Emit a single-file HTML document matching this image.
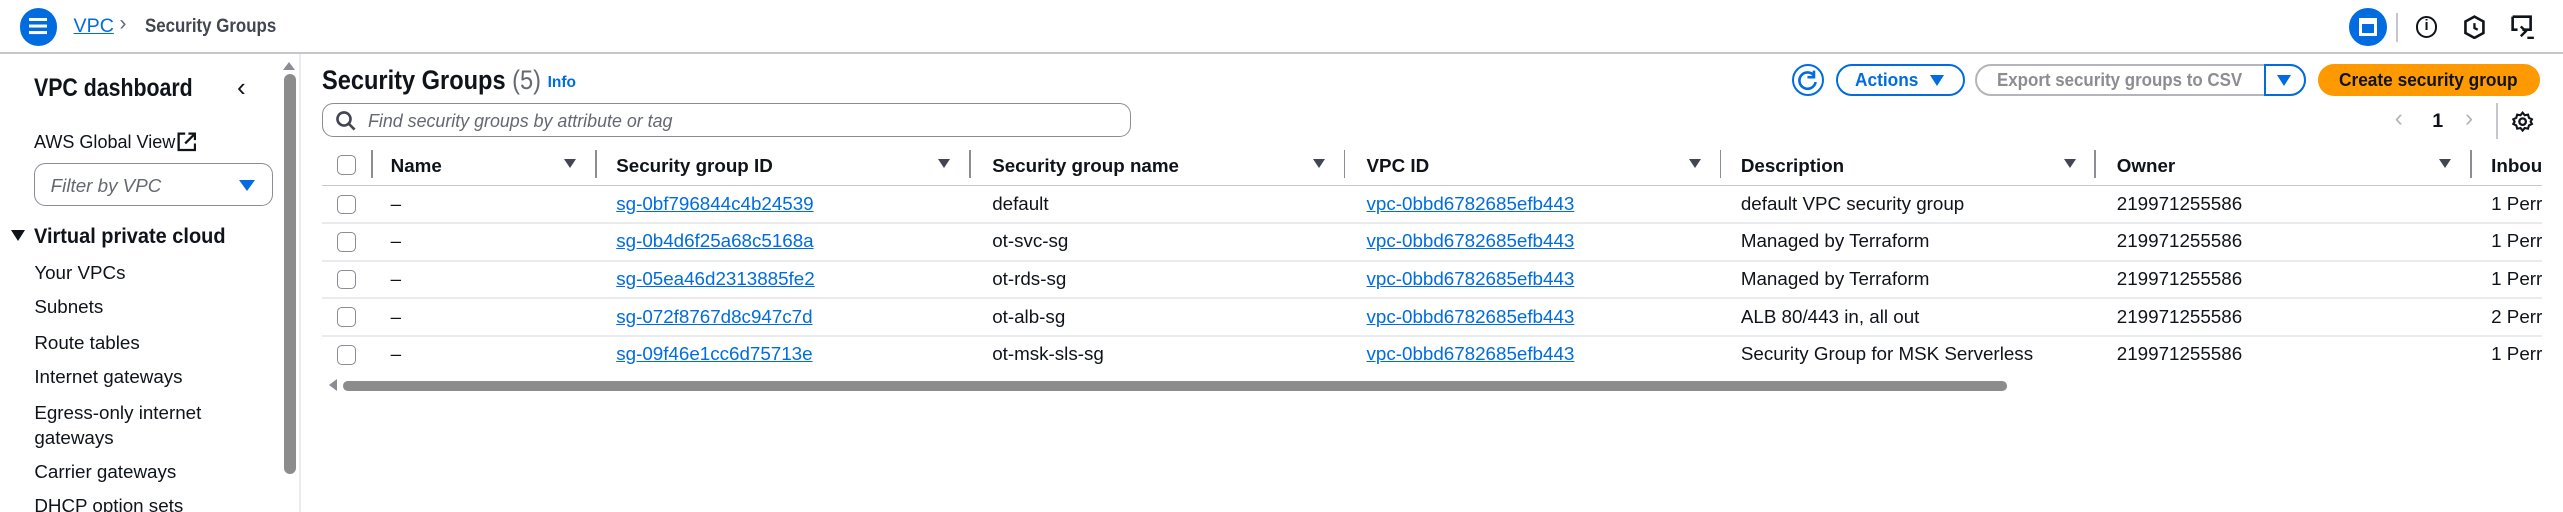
<!DOCTYPE html>
<html><head><meta charset="utf-8"><style>
*{box-sizing:border-box;margin:0;padding:0}
html,body{width:2563px;height:512px;overflow:hidden;background:#fff}
#w{zoom:1.6346;width:1568px;height:313px;position:relative;font-family:"Liberation Sans",sans-serif;color:#0f141a;font-size:11.5px;background:#fff}
.a{position:absolute;white-space:nowrap}
.lk{color:#006ce0;text-decoration:underline}
.b{font-weight:bold}
.cb{position:absolute;width:12px;height:12px;border:1px solid #8c8c94;border-radius:3px;background:#fff}
.hd{position:absolute;top:95px;font-weight:bold;font-size:11.5px;color:#0f141a}
.ft{position:absolute;top:97px;width:0;height:0;border-left:4px solid transparent;border-right:4px solid transparent;border-top:6px solid #424650}
.dv{position:absolute;top:92px;width:1px;height:17px;background:#8c8c94}
.rl{position:absolute;left:197px;width:1358px;height:1px;background:#e9ebed}
.nav{position:absolute;left:21px;font-size:11.5px;color:#0f141a}
.sx{transform-origin:0 0}
</style></head><body><div id="w">
<!-- top bar -->
<div class="a" style="left:0;top:32px;width:1568px;height:1px;background:#c6c6cd"></div>
<div class="a" style="left:12px;top:5px;width:23px;height:23px;border-radius:50%;background:#006ce0"></div>
<div class="a" style="left:18px;top:11px;width:11px;height:2px;background:#fff;box-shadow:0 4px 0 #fff,0 8px 0 #fff"></div>
<div class="a lk" style="left:45px;top:9px;font-size:12px">VPC</div>
<div class="a" style="left:73px;top:7px;font-size:13px;color:#656871">›</div>
<div class="a b sx" style="left:89px;top:9px;font-size:12px;color:#424650;transform:scaleX(.86)">Security Groups</div>
<div class="a" style="left:1437px;top:5px;width:23px;height:23px;border-radius:50%;background:#006ce0"></div>
<div class="a" style="left:1443px;top:11px;width:11px;height:11px;border:2px solid #fff;border-top-width:4px"></div>
<div class="a" style="left:1466px;top:8px;width:1px;height:18px;background:#c6c6cd"></div>
<div class="a" style="left:1478px;top:10px;width:13px;height:13px;border:1.6px solid #0f141a;border-radius:50%;font-size:9px;font-weight:bold;text-align:center;line-height:10px">i</div>
<svg class="a" style="left:1507px;top:9px" width="14" height="15" viewBox="0 0 14 15"><path d="M7 1L12.5 4v7L7 14 1.5 11V4z" fill="none" stroke="#0f141a" stroke-width="1.6"/><path d="M7 5v3l2 1" fill="none" stroke="#0f141a" stroke-width="1.4"/></svg>
<svg class="a" style="left:1536px;top:9px" width="15" height="15" viewBox="0 0 15 15"><path d="M1 1h11v8H7M1 1v8h3" fill="none" stroke="#0f141a" stroke-width="1.6"/><path d="M6 7l3 3-3 3M10 14h4" fill="none" stroke="#0f141a" stroke-width="1.5"/></svg>
<!-- sidebar -->
<div class="a" style="left:183px;top:33px;width:1px;height:280px;background:#e9ebed"></div>
<div class="a" style="left:173px;top:38px;border-left:4px solid transparent;border-right:4px solid transparent;border-bottom:5px solid #8c8c94"></div>
<div class="a" style="left:174px;top:45px;width:7px;height:245px;border-radius:4px;background:#8c8c8c"></div>
<div class="a b sx" style="left:21px;top:46px;font-size:15px;transform:scaleX(.87)">VPC dashboard</div>
<div class="a" style="left:145px;top:44px;font-size:16px">‹</div>
<div class="a sx" style="left:21px;top:80px;font-size:11.5px;transform:scaleX(.96)">AWS Global View</div>
<svg class="a" style="left:108px;top:81px" width="12" height="12" viewBox="0 0 12 12"><path d="M5 1H1v10h10V7M7 1h4v4M11 1L5 7" fill="none" stroke="#0f141a" stroke-width="1.4"/></svg>
<div class="a" style="left:21px;top:100px;width:146px;height:26px;border:1px solid #8c8c94;border-radius:7px"></div>
<div class="a" style="left:31px;top:107px;font-style:italic;color:#656871">Filter by VPC</div>
<div class="a" style="left:146px;top:110px;border-left:5px solid transparent;border-right:5px solid transparent;border-top:7px solid #006ce0"></div>
<div class="a" style="left:7px;top:141px;border-left:4.5px solid transparent;border-right:4.5px solid transparent;border-top:7px solid #0f141a"></div>
<div class="a b sx" style="left:21px;top:137px;font-size:13px;transform:scaleX(.94)">Virtual private cloud</div>
<div class="nav a" style="top:160px">Your VPCs</div>
<div class="nav a" style="top:181px">Subnets</div>
<div class="nav a" style="top:203px">Route tables</div>
<div class="nav a" style="top:224px">Internet gateways</div>
<div class="nav a" style="top:246px">Egress-only internet</div>
<div class="nav a" style="top:261px">gateways</div>
<div class="nav a" style="top:282px">Carrier gateways</div>
<div class="nav a" style="top:303px">DHCP option sets</div>
<!-- main header -->
<div class="a b sx" style="left:197px;top:40px;font-size:16.5px;transform:scaleX(.875)">Security Groups <span style="font-weight:normal;color:#656871">(5)</span></div>
<div class="a b" style="left:335px;top:45px;font-size:9.5px;color:#006ce0">Info</div>
<div class="a" style="left:197px;top:63px;width:495px;height:21px;border:1px solid #8c8c94;border-radius:7px"></div>
<svg class="a" style="left:205px;top:67px" width="13" height="13" viewBox="0 0 13 13"><circle cx="5.5" cy="5.5" r="4" fill="none" stroke="#424650" stroke-width="1.6"/><path d="M8.5 8.5l3.5 3.5" stroke="#424650" stroke-width="1.6"/></svg>
<div class="a sx" style="left:225px;top:67px;font-style:italic;color:#656871;transform:scaleX(.95)">Find security groups by attribute or tag</div>
<!-- buttons -->
<div class="a" style="left:1096px;top:39px;width:20px;height:20px;border:1.5px solid #006ce0;border-radius:50%"></div>
<svg class="a" style="left:1099px;top:42px" width="14" height="14" viewBox="0 0 14 14"><path d="M11 4A5 5 0 1 0 12 8" fill="none" stroke="#006ce0" stroke-width="1.6"/><path d="M11 1v4H7" fill="none" stroke="#006ce0" stroke-width="1.6"/></svg>
<div class="a" style="left:1123px;top:39px;width:79px;height:20px;border:1.5px solid #006ce0;border-radius:10px"></div>
<div class="a b sx" style="left:1135px;top:42px;color:#006ce0;transform:scaleX(.92)">Actions</div>
<div class="a" style="left:1181px;top:46px;border-left:4.5px solid transparent;border-right:4.5px solid transparent;border-top:7px solid #006ce0"></div>
<div class="a" style="left:1208px;top:39px;width:203px;height:20px;border:1.5px solid #b4b4bb;border-radius:10px"></div>
<div class="a" style="left:1385px;top:39px;width:26px;height:20px;border:1.5px solid #006ce0;border-radius:0 10px 10px 0"></div>
<div class="a b sx" style="left:1222px;top:42px;color:#8c8c94;transform:scaleX(.9)">Export security groups to CSV</div>
<div class="a" style="left:1393px;top:46px;border-left:4.5px solid transparent;border-right:4.5px solid transparent;border-top:7px solid #006ce0"></div>
<div class="a" style="left:1418px;top:39px;width:136px;height:20px;border-radius:10px;background:#ff9900"></div>
<div class="a b sx" style="left:1431px;top:42px;color:#0f141a;transform:scaleX(.92)">Create security group</div>
<div class="a" style="left:1465px;top:64px;font-size:15px;color:#b4b4bb">‹</div>
<div class="a b" style="left:1488px;top:67px;font-size:12px">1</div>
<div class="a" style="left:1508px;top:64px;font-size:15px;color:#b4b4bb">›</div>
<div class="a" style="left:1527px;top:63px;width:1px;height:22px;background:#c6c6cd"></div>
<svg class="a" style="left:1537px;top:68px" width="13" height="13" viewBox="0 0 13 13"><circle cx="6.5" cy="6.5" r="2" fill="none" stroke="#0f141a" stroke-width="1.4"/><path d="M6.5 1l1.3 1.6 2-.4.6 2 1.8.9-.8 1.4.8 1.4-1.8.9-.6 2-2-.4L6.5 12 5.2 10.4l-2 .4-.6-2L.8 7.9 1.6 6.5.8 5.1l1.8-.9.6-2 2 .4z" fill="none" stroke="#0f141a" stroke-width="1.3"/></svg>
<!-- table header -->
<div class="cb" style="left:206px;top:95px"></div>
<div class="dv" style="left:227px"></div>
<div class="hd" style="left:239px">Name</div><div class="ft" style="left:345px"></div><div class="dv" style="left:364px"></div>
<div class="hd" style="left:377px">Security group ID</div><div class="ft" style="left:574px"></div><div class="dv" style="left:593px"></div>
<div class="hd" style="left:607px">Security group name</div><div class="ft" style="left:803px"></div><div class="dv" style="left:822px"></div>
<div class="hd" style="left:836px">VPC ID</div><div class="ft" style="left:1033px"></div><div class="dv" style="left:1052px"></div>
<div class="hd" style="left:1065px">Description</div><div class="ft" style="left:1263px"></div><div class="dv" style="left:1281px"></div>
<div class="hd" style="left:1295px">Owner</div><div class="ft" style="left:1492px"></div><div class="dv" style="left:1511px"></div>
<div class="hd" style="left:1524px">Inbou</div>
<div class="a" style="left:197px;top:113px;width:1358px;height:1px;background:#c6c6cd"></div>
<div class="rl" style="top:136px"></div><div class="rl" style="top:159px"></div><div class="rl" style="top:182px"></div><div class="rl" style="top:205px"></div>
<!-- rows -->
<div class="cb" style="left:206px;top:119px"></div><div class="a" style="left:239px;top:118px">–</div><div class="a lk" style="left:377px;top:118px">sg-0bf796844c4b24539</div><div class="a" style="left:607px;top:118px">default</div><div class="a lk" style="left:836px;top:118px">vpc-0bbd6782685efb443</div><div class="a" style="left:1065px;top:118px">default VPC security group</div><div class="a" style="left:1295px;top:118px">219971255586</div><div class="a" style="left:1524px;top:118px">1 Perr</div>
<div class="cb" style="left:206px;top:142px"></div><div class="a" style="left:239px;top:141px">–</div><div class="a lk" style="left:377px;top:141px">sg-0b4d6f25a68c5168a</div><div class="a" style="left:607px;top:141px">ot-svc-sg</div><div class="a lk" style="left:836px;top:141px">vpc-0bbd6782685efb443</div><div class="a" style="left:1065px;top:141px">Managed by Terraform</div><div class="a" style="left:1295px;top:141px">219971255586</div><div class="a" style="left:1524px;top:141px">1 Perr</div>
<div class="cb" style="left:206px;top:165px"></div><div class="a" style="left:239px;top:164px">–</div><div class="a lk" style="left:377px;top:164px">sg-05ea46d2313885fe2</div><div class="a" style="left:607px;top:164px">ot-rds-sg</div><div class="a lk" style="left:836px;top:164px">vpc-0bbd6782685efb443</div><div class="a" style="left:1065px;top:164px">Managed by Terraform</div><div class="a" style="left:1295px;top:164px">219971255586</div><div class="a" style="left:1524px;top:164px">1 Perr</div>
<div class="cb" style="left:206px;top:188px"></div><div class="a" style="left:239px;top:187px">–</div><div class="a lk" style="left:377px;top:187px">sg-072f8767d8c947c7d</div><div class="a" style="left:607px;top:187px">ot-alb-sg</div><div class="a lk" style="left:836px;top:187px">vpc-0bbd6782685efb443</div><div class="a" style="left:1065px;top:187px">ALB 80/443 in, all out</div><div class="a" style="left:1295px;top:187px">219971255586</div><div class="a" style="left:1524px;top:187px">2 Perr</div>
<div class="cb" style="left:206px;top:211px"></div><div class="a" style="left:239px;top:210px">–</div><div class="a lk" style="left:377px;top:210px">sg-09f46e1cc6d75713e</div><div class="a" style="left:607px;top:210px">ot-msk-sls-sg</div><div class="a lk" style="left:836px;top:210px">vpc-0bbd6782685efb443</div><div class="a" style="left:1065px;top:210px">Security Group for MSK Serverless</div><div class="a" style="left:1295px;top:210px">219971255586</div><div class="a" style="left:1524px;top:210px">1 Perr</div>
<!-- h scroll -->
<div class="a" style="left:201px;top:232px;border-top:4px solid transparent;border-bottom:4px solid transparent;border-right:5px solid #8c8c94"></div>
<div class="a" style="left:210px;top:233px;width:1018px;height:6px;border-radius:3px;background:#8c8c8c"></div>
</div></body></html>
